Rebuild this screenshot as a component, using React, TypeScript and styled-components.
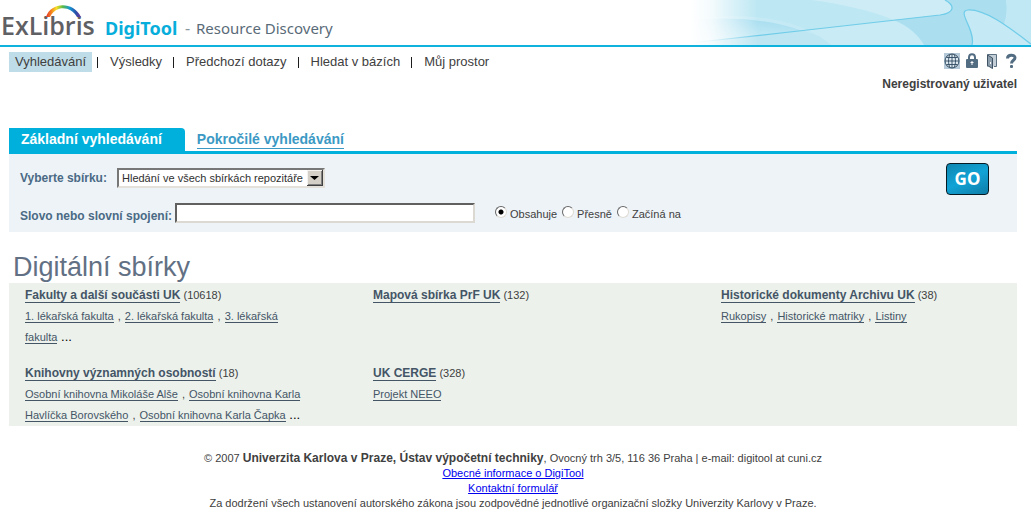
import React from "react";
import styled, { createGlobalStyle } from "styled-components";

const GlobalStyle = createGlobalStyle`
  * { box-sizing: border-box; }
  body {
    margin: 0;
    background: #fff;
    color: #404040;
    font: 11px/15px "Liberation Sans", Arial, sans-serif;
  }
`;

const Header = styled.header`
  display: flex;
  justify-content: space-between;
  height: 47px;
  border-bottom: 2px solid #0eb2dc;
  overflow: hidden;
`;

const Brand = styled.svg`
  flex: none;
  width: 345px;
  height: 45px;
`;

const Banner = styled.svg`
  flex: none;
  width: 341px;
  height: 45px;
`;

const TopBar = styled.div`
  display: flex;
  justify-content: space-between;
  align-items: flex-start;
  height: 81px;
  padding: 5px 14px 0 9px;
`;

const Nav = styled.nav`
  display: flex;
  align-items: center;
`;

const NavLink = styled.a<{ $active?: boolean }>`
  padding: 0 6px;
  line-height: 20px;
  font-size: 13px;
  color: #404040;
  text-decoration: none;
  background: ${(p) => (p.$active ? "#bfdde8" : "transparent")};
`;

const Separator = styled.span`
  width: 1px;
  height: 11px;
  margin: 0 6px 0 5px;
  background: #1c1c1c;
`;

const UserArea = styled.div`
  display: flex;
  flex-direction: column;
  align-items: flex-end;
  gap: 8px;
`;

const Tools = styled.div`
  display: flex;
  gap: 3px;
`;

const ToolButton = styled.button`
  display: block;
  width: 16px;
  height: 17px;
  padding: 0;
  border: 0;
  background: none;

  svg { display: block; }
`;

const UserName = styled.strong`
  font-size: 12px;
  line-height: 15px;
`;

const Main = styled.main`
  margin: 0 14px 0 9px;
`;

const Tabs = styled.div`
  display: flex;
  height: 26px;
  border-bottom: 3px solid #00b0dc;
`;

const Tab = styled.a<{ $active?: boolean }>`
  padding: 0 12px;
  font-size: 14px;
  font-weight: bold;
  line-height: 23px;
  text-decoration: none;
  color: ${(p) => (p.$active ? "#fff" : "#3b99c4")};
  background: ${(p) => (p.$active ? "#00b0dc" : "transparent")};
  border-top-right-radius: 4px;
  padding-right: ${(p) => (p.$active ? "23px" : "0")};

  span {
    display: inline-block;
    line-height: 17px;
    border-bottom: 1px solid ${(p) => (p.$active ? "transparent" : "#3b99c4")};
  }
`;

const SearchForm = styled.form`
  display: flex;
  justify-content: space-between;
  align-items: flex-start;
  padding: 9px 28px 9px 11px;
  background: #eef3f7;
`;

const Fields = styled.div`
  display: flex;
  flex-direction: column;
  gap: 15px;
  padding-top: 5px;
`;

const Field = styled.div`
  display: flex;
  align-items: center;
  height: 20px;
`;

const FieldLabel = styled.label<{ $width: number; $low?: boolean }>`
  align-self: ${(p) => (p.$low ? "flex-end" : "center")};
  width: ${(p) => p.$width}px;
  font-size: 12px;
  line-height: ${(p) => (p.$low ? "13px" : "20px")};
  font-weight: bold;
  color: #4a6a85;
  white-space: nowrap;
`;

const SelectFrame = styled.div`
  position: relative;
  width: 208px;
  height: 20px;

  svg {
    position: absolute;
    top: 2px;
    right: 2px;
    pointer-events: none;
  }
`;

const Select = styled.select`
  appearance: none;
  width: 100%;
  height: 20px;
  padding: 0 18px 0 3px;
  border: 2px solid;
  border-color: #777 #e4e1da #e4e1da #777;
  border-radius: 0;
  background: #fff;
  color: #303030;
  font: 11px "Liberation Sans", Arial, sans-serif;
`;

const TextInput = styled.input`
  width: 300px;
  height: 20px;
  padding: 0 3px;
  border: 2px solid;
  border-color: #606060 #dcd9d2 #dcd9d2 #606060;
  background: #fff;
  font: 11px "Liberation Sans", Arial, sans-serif;
`;

const Options = styled.fieldset`
  display: flex;
  gap: 5px;
  margin: 0 0 0 20px;
  padding: 2px 0 0;
  border: 0;
`;

const Option = styled.label`
  display: flex;
  align-items: center;
  gap: 3px;
`;

const Radio = styled.input`
  appearance: none;
  width: 12px;
  height: 12px;
  margin: 0 0 4px;
  border: 1px solid;
  border-color: #666 #dedbd4 #dedbd4 #666;
  border-radius: 50%;
  background: #fff;

  &:checked {
    background: radial-gradient(circle, #000 0 2px, #fff 3px);
  }
`;

const GoButton = styled.button`
  width: 43px;
  height: 32px;
  padding: 0;
  border: 1px solid #061a24;
  border-radius: 4px;
  background: linear-gradient(155deg, #0d86b0, #12a3d6 50%, #0e7ba6);
  color: #fff;
  font: bold 17px/30px "Noto Sans", sans-serif;
`;

const Title = styled.h1`
  margin: 19px 0 0 4px;
  font-size: 27px;
  line-height: 32px;
  font-weight: normal;
  color: #627084;
`;

const Collections = styled.section`
  display: grid;
  grid-template-columns: repeat(3, 1fr);
  gap: 15px 68px;
  padding: 2px 16px 0;
  background: #ecf1ec;
`;

const Collection = styled.article`
  line-height: 21px;
`;

const CollectionName = styled.h2`
  display: inline;
  margin: 0;
  font-size: 12px;
`;

const UnderlinedLink = styled.a`
  color: #445566;
  text-decoration: none;
  border-bottom: 1px solid #445566;
`;

const Comma = styled.span`
  margin: 0 1px;
`;

const Ellipsis = styled.span`
  font-size: 13px;
  line-height: 13px;
  color: #000;
`;

const Footer = styled.footer`
  padding: 25px 0 6px;
  text-align: center;

  p { margin: 0; }
  a { color: #0000ee; }
  strong { font-size: 12px; line-height: 12px; }
`;

const modes = ["Obsahuje", "Přesně", "Začíná na"];
const pages = ["Vyhledávání", "Výsledky", "Předchozí dotazy", "Hledat v bázích", "Můj prostor"];

const collections = [
  { name: "Fakulty a další součásti UK", count: 10618, items: ["1. lékařská fakulta", "2. lékařská fakulta", "3. lékařská fakulta"], more: true },
  { name: "Mapová sbírka PrF UK", count: 132, items: [] },
  { name: "Historické dokumenty Archivu UK", count: 38, items: ["Rukopisy", "Historické matriky", "Listiny"] },
  { name: "Knihovny významných osobností", count: 18, items: ["Osobní knihovna Mikoláše Alše", "Osobní knihovna Karla Havlíčka Borovského", "Osobní knihovna Karla Čapka"], more: true },
  { name: "UK CERGE", count: 328, items: ["Projekt NEEO"] },
];

const Logo = () => (
  <Brand viewBox="0 0 345 45" role="img" aria-label="ExLibris DigiTool - Resource Discovery">
    <defs>
      <linearGradient id="rainbow" x1="0" x2="1">
        <stop offset="0" stopColor="#e5332a" />
        <stop offset=".15" stopColor="#f58220" />
        <stop offset=".3" stopColor="#f5df28" />
        <stop offset=".48" stopColor="#58b947" />
        <stop offset=".68" stopColor="#1597d4" />
        <stop offset=".85" stopColor="#2850a8" />
        <stop offset="1" stopColor="#72329a" />
      </linearGradient>
    </defs>
    <text x="1" y="35" fontFamily="Open Sans" fontWeight="600" fontSize="25" fill="#5f6063">ExLibris</text>
    <path d="M46 17C51 2 73 1 81 17L77 17C71 7 57 4 50 17Z" fill="url(#rainbow)" />
    <text x="105" y="35" fontFamily="Noto Sans" fontWeight="700" fontSize="18" fill="#08aedb">DigiTool</text>
    <text x="185" y="34" fontFamily="Noto Sans" fontSize="16" fill="#8a969d">-</text>
    <text x="196" y="34" fontFamily="Noto Sans" fontSize="15" fill="#596b78">Resource Discovery</text>
  </Brand>
);

const Waves = () => (
  <Banner viewBox="0 0 341 45" aria-hidden="true">
    <defs>
      <linearGradient id="fade" x1="0" x2="1">
        <stop offset="0" stopColor="#fff" />
        <stop offset=".06" stopColor="#fff" stopOpacity=".85" />
        <stop offset=".2" stopColor="#fff" stopOpacity="0" />
      </linearGradient>
      <linearGradient id="glow" x1="0" y1="1" x2=".4" y2="0">
        <stop offset="0" stopColor="#d7f1f8" />
        <stop offset="1" stopColor="#a8def0" />
      </linearGradient>
    </defs>
    <rect width="341" height="45" fill="#c5eaf5" />
    <path d="M50 0H255C268 8 262 13 250 15L118 30C100 22 65 10 0 20V0Z" fill="#bce7f3" />
    <path d="M100 0H255C266 8 262 13 250 15L204 20C180 10 145 3 121 0Z" fill="#cdecf6" />
    <path d="M0 20C70 14 112 27 141 45H0Z" fill="url(#glow)" />
    <path d="M0 43L115 31C130 36 136 40 141 45H0Z" fill="#bde6f2" />
    <path d="M118 30L204 20C220 27 229 36 234 45H141C136 40 130 36 118 30Z" fill="#c8ebf5" />
    <path d="M204 20L250 15C264 13 266 6 255 0H316C319 17 312 34 303 45H234C229 36 220 27 204 20Z" fill="#abdff0" />
    <path d="M282 45C286 30 266 11 278 10C288 9 301 15 315 25C312 34 308 40 303 45Z" fill="#c5eaf5" />
    <path d="M316 0H341V45C332 38 324 31 315 25C317 17 318 8 316 0Z" fill="#c0e8f4" />
    <path d="M0 43C80 34 175 24 250 15C264 13 266 6 255 0M282 45C286 30 266 11 278 10C296 9 321 29 341 44" fill="none" stroke="#70cce8" strokeWidth="1.2" />
    <rect width="341" height="45" fill="url(#fade)" />
  </Banner>
);

const GlobeIcon = () => (
  <svg width="16" height="16" viewBox="0 0 16 16">
    <path d="M0 0h16v16H0z" fill="#b5c9d8" />
    <circle cx="8" cy="8" r="7" fill="#dce7ef" stroke="#314b61" />
    <path d="M8 1v14M1 8h14M2.500 4.500h11M2.500 11.500h11M6 1.500C4 5 4 11 6 14.500M10 1.500C12 5 12 11 10 14.500" fill="none" stroke="#314b61" strokeWidth=".9" />
  </svg>
);

const LockIcon = () => (
  <svg width="16" height="16" viewBox="0 0 16 16">
    <path d="M6 8V4.500C6 0 12 0 12 4.500V8" fill="none" stroke="#526c82" strokeWidth="2" />
    <rect x="3" y="6" width="12" height="9" rx="1" fill="#526c82" />
    <path d="M8.500 8h1v1h1v1h-1v2h-1v-2h-1V9h1z" fill="#fff" />
  </svg>
);

const DoorIcon = () => (
  <svg width="16" height="16" viewBox="0 0 16 16">
    <path d="M5.500 13.500v-12h9v12H12" fill="#c3ced6" stroke="#5b7080" />
    <path d="M5.500 2l5 3v10.500L5.500 12.500z" fill="#8b9dab" stroke="#3f5364" />
    <path d="M8 9h1v2H8z" fill="#fff" />
  </svg>
);

const HelpIcon = () => (
  <svg width="16" height="16" viewBox="0 0 16 16">
    <path d="M6.500 5.500C6.500 1 14 1.300 14 4.800C14 7.500 10.500 7 10.500 10.500" fill="none" stroke="#526c82" strokeWidth="3" />
    <rect x="9" y="12" width="3" height="3" rx="1" fill="#526c82" />
  </svg>
);

export default function App() {
  return (
    <>
      <GlobalStyle />
      <Header>
        <Logo />
        <Waves />
      </Header>
      <TopBar>
        <Nav>
          {pages.map((page, i) => (
            <React.Fragment key={page}>
              {i > 0 && <Separator />}
              <NavLink href="#" $active={i === 0}>{page}</NavLink>
            </React.Fragment>
          ))}
        </Nav>
        <UserArea>
          <Tools>
            <ToolButton aria-label="Jazyk"><GlobeIcon /></ToolButton>
            <ToolButton aria-label="Přihlásit"><LockIcon /></ToolButton>
            <ToolButton aria-label="Odhlásit"><DoorIcon /></ToolButton>
            <ToolButton aria-label="Nápověda"><HelpIcon /></ToolButton>
          </Tools>
          <UserName>Neregistrovaný uživatel</UserName>
        </UserArea>
      </TopBar>
      <Main>
        <Tabs>
          <Tab href="#" $active><span>Základní vyhledávání</span></Tab>
          <Tab href="#"><span>Pokročilé vyhledávání</span></Tab>
        </Tabs>
        <SearchForm>
          <Fields>
            <Field>
              <FieldLabel htmlFor="collection" $width={97}>Vyberte sbírku:</FieldLabel>
              <SelectFrame>
                <Select id="collection">
                  <option>Hledání ve všech sbírkách repozitáře</option>
                </Select>
                <svg width="16" height="16" viewBox="0 0 16 16">
                  <path d="M0 0h16v16H0z" fill="#404040" />
                  <path d="M0 0h15v15H0z" fill="#f4f2ee" />
                  <path d="M1 1h14v14H1z" fill="#808080" />
                  <path d="M1 1h13v13H1z" fill="#d4d0c8" />
                  <path d="M3 6h9L7.500 10z" fill="#000" />
                </svg>
              </SelectFrame>
            </Field>
            <Field>
              <FieldLabel htmlFor="query" $width={155} $low>Slovo nebo slovní spojení:</FieldLabel>
              <TextInput id="query" type="text" />
              <Options>
                {modes.map((mode, i) => (
                  <Option key={mode}>
                    <Radio type="radio" name="mode" defaultChecked={i === 0} />
                    {mode}
                  </Option>
                ))}
              </Options>
            </Field>
          </Fields>
          <GoButton type="button">GO</GoButton>
        </SearchForm>
        <Title>Digitální sbírky</Title>
        <Collections>
          {collections.map((c) => (
            <Collection key={c.name}>
              <div>
                <CollectionName><UnderlinedLink href="#">{c.name}</UnderlinedLink></CollectionName> ({c.count})
              </div>
              {c.items.map((item, i) => (
                <React.Fragment key={item}>
                  {i > 0 && <Comma> , </Comma>}
                  <UnderlinedLink href="#">{item}</UnderlinedLink>
                </React.Fragment>
              ))}
              {c.more && <Ellipsis> ...</Ellipsis>}
            </Collection>
          ))}
        </Collections>
        <Footer>
          <p>© 2007 <strong>Univerzita Karlova v Praze, Ústav výpočetní techniky</strong>, Ovocný trh 3/5, 116 36 Praha | e-mail: digitool at cuni.cz</p>
          <p><a href="#">Obecné informace o DigiTool</a></p>
          <p><a href="#">Kontaktní formulář</a></p>
          <p>Za dodržení všech ustanovení autorského zákona jsou zodpovědné jednotlivé organizační složky Univerzity Karlovy v Praze.</p>
        </Footer>
      </Main>
    </>
  );
}
